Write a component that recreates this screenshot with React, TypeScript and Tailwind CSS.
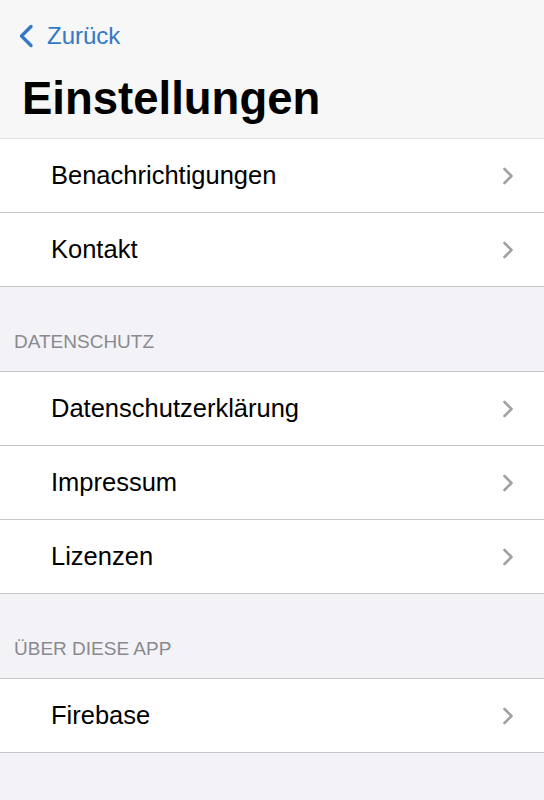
import { ReactNode } from "react";

const font = { fontFamily: '"Liberation Sans", Arial, sans-serif' };

function Chevron() {
  return (
    <svg width="12" height="18" viewBox="0 0 12 18" className="mr-[30px] shrink-0">
      <path d="M2.5 2 L9.5 9 L2.5 16" fill="none" stroke="#a0a0a5" strokeWidth="2.6" strokeLinecap="round" strokeLinejoin="round" />
    </svg>
  );
}

function Row({ label }: { label: string }) {
  return (
    <div className="flex h-[74px] items-center justify-between border-b border-[#c6c6c8] bg-white">
      <span className="pl-[51px] text-[25.5px] text-black">{label}</span>
      <Chevron />
    </div>
  );
}

function Section({ title, children }: { title?: string; children: ReactNode }) {
  return (
    <div>
      {title && (
        <div className="flex h-[85px] items-end border-b border-[#c6c6c8] pb-[15px] pl-[14px] text-[19px] text-[#8a8a8e]">
          {title}
        </div>
      )}
      {children}
    </div>
  );
}

export default function App() {
  return (
    <div className="min-h-[800px] w-[544px] bg-[#f2f2f7]" style={font}>
      <header className="h-[139px] border-b border-[#e3e3e5] bg-[#f7f7f7]">
        <div className="flex items-center pl-[18px] pt-[24px]">
          <svg width="16" height="24" viewBox="0 0 16 24">
            <path d="M13 2.5 L3.5 12 L13 21.5" fill="none" stroke="#3478c6" strokeWidth="3.4" strokeLinecap="round" strokeLinejoin="round" />
          </svg>
          <span className="ml-[13px] text-[24px] leading-[24px] text-[#3478c6]">Zurück</span>
        </div>
        <h1 className="pl-[22px] pt-[28px] text-[45.5px] font-bold leading-[45px] text-black">Einstellungen</h1>
      </header>
      <Section>
        <Row label="Benachrichtigungen" />
        <Row label="Kontakt" />
      </Section>
      <Section title="DATENSCHUTZ">
        <Row label="Datenschutzerklärung" />
        <Row label="Impressum" />
        <Row label="Lizenzen" />
      </Section>
      <Section title="ÜBER DIESE APP">
        <Row label="Firebase" />
      </Section>
    </div>
  );
}
